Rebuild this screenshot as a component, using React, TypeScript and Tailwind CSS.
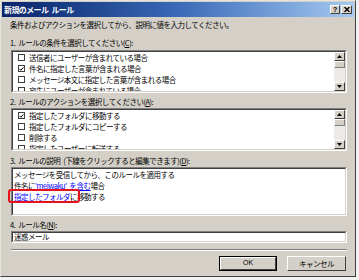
import React from 'react'

const jp = "font-['Noto_Sans_CJK_JP','Noto_Sans_CJK_SC',sans-serif]"

function Check({ checked }: { checked?: boolean }) {
  return (
    <span className="w-[7px] h-[7px] border border-[#404040] bg-white flex items-center justify-center shrink-0">
      {checked && (
        <svg viewBox="0 0 7 7" className="w-[6px] h-[6px]">
          <path d="M0.8 3.4 L2.6 5.3 L6.2 1.2" stroke="#000" strokeWidth="1.4" fill="none" />
        </svg>
      )}
    </span>
  )
}

function ScrollBtn({ down }: { down?: boolean }) {
  return (
    <div className="h-[9px] bg-[#d4d0c8] border border-t-white border-l-white border-b-[#404040] border-r-[#404040] flex items-center justify-center shrink-0">
      <svg viewBox="0 0 5 3" className="w-[5px] h-[3px]">
        {down ? <path d="M0 0 H5 L2.5 3 Z" fill="#000" /> : <path d="M0 3 H5 L2.5 0 Z" fill="#000" />}
      </svg>
    </div>
  )
}

function ScrollBar() {
  return (
    <div className="w-[11px] flex flex-col bg-[#eceae6] shrink-0">
      <ScrollBtn />
      <div className="h-[7px] bg-[#d4d0c8] border border-t-white border-l-white border-b-[#808080] border-r-[#808080] shrink-0" />
      <div className="flex-1" />
      <ScrollBtn down />
    </div>
  )
}

function Sunken({ className, children }: { className?: string; children?: React.ReactNode }) {
  return (
    <div className={`border border-t-[#808080] border-l-[#808080] border-b-white border-r-white ${className ?? ''}`}>
      <div className="h-full border border-t-[#404040] border-l-[#404040] border-b-[#d4d0c8] border-r-[#d4d0c8] bg-white flex">
        {children}
      </div>
    </div>
  )
}

function Row({ checked, text }: { checked?: boolean; text: string }) {
  return (
    <div className="h-[11px] flex items-center gap-[4px] pl-[5px] whitespace-nowrap">
      <Check checked={checked} />
      <span>{text}</span>
    </div>
  )
}

function Sp() {
  return <span className="inline-block w-[3px]" />
}

function Label({ children, className }: { children: React.ReactNode; className?: string }) {
  return <div className={`h-[10px] leading-[10px] whitespace-nowrap -ml-[1px] ${className ?? ''}`}>{children}</div>
}

export default function App() {
  return (
    <div className={`w-[359px] h-[280px] bg-[#f2f2f2] ${jp} text-[7.5px] text-black tracking-[-0.5px]`}>
      <div className="w-[356px] h-[277px] bg-[#d4d0c8] border border-t-[#e6e4de] border-l-[#e6e4de] border-b-[#404040] border-r-[#404040] p-[1px] flex flex-col">
        {/* title bar */}
        <div className="h-[15px] bg-linear-to-r from-[#0a246a] via-[#3a6ab8] to-[#a6caf0] flex items-center justify-between pl-[2px] pr-[2px] shrink-0">
          <span className="text-white font-bold text-[8px] tracking-[-0.6px]">新規のメール<Sp />ルール</span>
          <div className="flex gap-[1px]">
            <div className="w-[10px] h-[9px] bg-[#d4d0c8] border border-t-white border-l-white border-b-[#404040] border-r-[#404040] flex items-center justify-center text-[7px] font-bold leading-none font-['Liberation_Sans',sans-serif]">?</div>
            <div className="w-[11px] h-[9px] bg-[#d4d0c8] border border-t-white border-l-white border-b-[#404040] border-r-[#404040] flex items-center justify-center">
              <svg viewBox="0 0 6 5" className="w-[6px] h-[5px]">
                <path d="M0.5 0 L5.5 5 M5.5 0 L0.5 5" stroke="#000" strokeWidth="1.3" />
              </svg>
            </div>
          </div>
        </div>

        <div className="flex flex-col pl-[9px] pr-[7px]">
          <Label className="mt-[3px]">条件およびアクションを選択してから、説明に値を入力してください。</Label>

          <Label className="mt-[8px]">1.<Sp />ルールの条件を選択してください(<span className="underline">C</span>):</Label>
          <Sunken className="mt-[2px] h-[43px]">
            <div className="flex-1 overflow-hidden">
              <Row text="送信者にユーザーが含まれている場合" />
              <Row checked text="件名に指定した言葉が含まれる場合" />
              <Row text="メッセージ本文に指定した言葉が含まれる場合" />
              <Row text="宛先にユーザーが含まれている場合" />
            </div>
            <ScrollBar />
          </Sunken>

          <Label className="mt-[4px]">2.<Sp />ルールのアクションを選択してください(<span className="underline">A</span>):</Label>
          <Sunken className="mt-[1px] h-[43px]">
            <div className="flex-1 overflow-hidden">
              <Row checked text="指定したフォルダに移動する" />
              <Row text="指定したフォルダにコピーする" />
              <Row text="削除する" />
              <Row text="指定したユーザーに転送する" />
            </div>
            <ScrollBar />
          </Sunken>

          <Label className="mt-[5px]">3.<Sp />ルールの説明<Sp />(下線をクリックすると編集できます)(<span className="underline">D</span>):</Label>
          <Sunken className="mt-[1px] h-[49px]">
            <div className="flex-1 pl-[1px] whitespace-nowrap">
              <div className="h-[11px] leading-[11px]">メッセージを受信してから、このルールを適用する</div>
              <div className="h-[11px] leading-[11px]">
                件名に<span className="text-[#0000ff] underline">'meiwaku'<Sp />を含む</span>場合
              </div>
              <div className="h-[11px] leading-[11px]">
                <span className="relative">
                  <span className="text-[#0000ff] underline">指定したフォルダ</span>に
                  <span className="absolute -left-[6px] -right-[3px] -top-[2px] -bottom-[1px] border-2 border-[#e5121c] rounded-[3px]" />
                </span>
                移動する
              </div>
            </div>
          </Sunken>

          <Label className="mt-[4px]">4.<Sp />ルール名(<span className="underline">N</span>):</Label>
          <Sunken className="mt-[1px] h-[12px]">
            <div className="flex-1 pl-[1px] leading-[8px] flex items-center">迷惑メール</div>
          </Sunken>

          <div className="mt-[6px] h-[2px] border-t border-t-[#808080] border-b border-b-white" />

          <div className="mt-[5px] flex justify-end gap-[10px] pr-[1px]">
            <div className="w-[58px] h-[15px] border border-black">
              <div className="h-full bg-[#d4d0c8] border border-t-white border-l-white border-b-[#404040] border-r-[#404040] flex items-center justify-center font-['Liberation_Sans',sans-serif] text-[7px] tracking-normal">
                OK
              </div>
            </div>
            <div className="w-[59px] h-[15px] bg-[#d4d0c8] border border-t-white border-l-white border-b-[#404040] border-r-[#404040] flex items-center justify-center">
              キャンセル
            </div>
          </div>
        </div>
      </div>
    </div>
  )
}
